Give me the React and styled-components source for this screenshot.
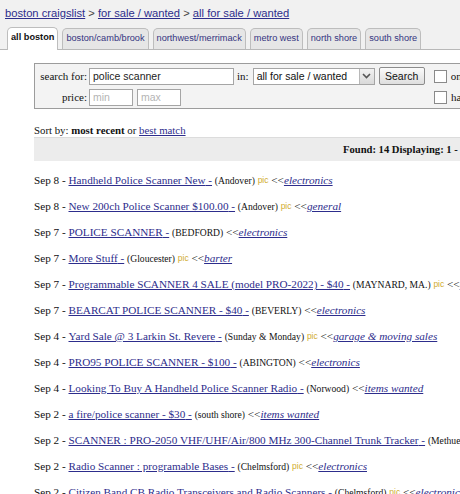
import styled, { createGlobalStyle } from 'styled-components';

const GlobalStyle = createGlobalStyle`
	html, body {
		margin: 0;
		padding: 0;
		overflow: hidden;
		background: #fff;
	}
	body {
		font-family: 'Liberation Serif', 'Times New Roman', serif;
		font-size: 11px;
		color: #111;
	}
`;

const Page = styled.div`
	width: 760px;
`;

const Top = styled.div`
	background: #f1f1f1;
	padding: 7px 0 0 5px;
	border-bottom: 1px solid #b8b8b8;
	font-family: 'Liberation Sans', Arial, sans-serif;
`;

const Crumbs = styled.div`
	font-size: 11.2px;
	color: #444;
	height: 20px;
	white-space: nowrap;
`;

const Link = styled.a`
	color: #2d2d8c;
	text-decoration: underline;
	font-style: ${(p) => (p.$italic ? 'italic' : 'normal')};
	cursor: pointer;
`;

const Tabs = styled.div`
	display: flex;
	gap: 4px;
	padding-left: 2px;
	align-items: flex-end;
`;

const Tab = styled.div`
	font-size: 9.2px;
	font-weight: ${(p) => (p.$active ? 700 : 400)};
	color: ${(p) => (p.$active ? '#111' : '#343480')};
	background: ${(p) => (p.$active ? '#fff' : '#e6e6e6')};
	border: 1px solid #bdbdbd;
	border-bottom: none;
	border-radius: 5px 5px 0 0;
	padding: 4px 3px 5px;
	margin-bottom: ${(p) => (p.$active ? '-1px' : '0')};
	height: ${(p) => (p.$active ? '13px' : '11px')};
	line-height: 11px;
	white-space: nowrap;
`;

const Main = styled.div`
	padding: 13px 0 0 34px;
`;

const SearchBox = styled.div`
	border: 1px solid #9c9c9c;
	background: #f3f3f3;
	padding: 3px 0 2px 2px;
	display: flex;
	flex-direction: column;
	gap: 3px;
`;

const FormRow = styled.div`
	display: flex;
	align-items: center;
	height: 18px;
	white-space: nowrap;
`;

const Label = styled.span`
	width: 50px;
	text-align: right;
	margin-right: 2px;
	font-size: 11px;
`;

const TextInput = styled.div`
	box-sizing: border-box;
	width: ${(p) => p.$w}px;
	height: 17px;
	border: 1px solid #a5a5a5;
	background: #fff;
	font-family: 'Liberation Sans', Arial, sans-serif;
	font-size: 10.5px;
	color: ${(p) => (p.$placeholder ? '#b4b4b4' : '#222')};
	padding: 1px 3px;
	margin-right: 4px;
	line-height: 13px;
`;

const InLabel = styled.span`
	margin: 0 4px 0 -1px;
	font-size: 11px;
`;

const Select = styled.div`
	box-sizing: border-box;
	width: 122px;
	height: 17px;
	border: 1px solid #a5a5a5;
	background: #fff;
	display: flex;
	align-items: center;
	font-family: 'Liberation Sans', Arial, sans-serif;
	font-size: 10.5px;
	padding-left: 3px;
	justify-content: space-between;
`;

const Arrow = styled.div`
	width: 15px;
	height: 15px;
	box-sizing: border-box;
	background: linear-gradient(#f2f2f2, #d9d9d9);
	border-left: 1px solid #b8b8b8;
	display: flex;
	align-items: center;
	justify-content: center;
`;

const Button = styled.div`
	margin-left: 4px;
	box-sizing: border-box;
	width: 46px;
	height: 18px;
	border: 1px solid #8c8c8c;
	border-radius: 2px;
	background: linear-gradient(#fbfbfb, #dedede);
	font-family: 'Liberation Sans', Arial, sans-serif;
	font-size: 10.5px;
	display: flex;
	align-items: center;
	justify-content: center;
`;

const Check = styled.div`
	width: 11px;
	height: 11px;
	border: 1px solid #8a8a8a;
	background: #fff;
	margin: 0 4px 0 ${(p) => p.$ml}px;
`;

const SortLine = styled.div`
	margin-top: 15px;
	font-size: 10.8px;
`;

const FoundBar = styled.div`
	margin-top: 1px;
	background: #ececec;
	border-top: 1px solid #dcdcdc;
	height: 23px;
	display: flex;
	align-items: center;
	padding-left: 309px;
	font-weight: 700;
	font-size: 10.6px;
	white-space: nowrap;
`;

const List = styled.div`
	padding-top: 6px;
`;

const Row = styled.div`
	height: 26px;
	display: flex;
	align-items: center;
	font-size: 11.2px;
	white-space: nowrap;
`;

const Small = styled.span`
	font-size: 9.6px;
`;

const Pic = styled.span`
	font-family: 'Liberation Sans', Arial, sans-serif;
	font-size: 8.5px;
	color: #d1ad2f;
`;

const rows = [
	['Sep 8', 'Handheld Police Scanner New', 'Andover', true, 'electronics'],
	['Sep 8', 'New 200ch Police Scanner $100.00', 'Andover', true, 'general'],
	['Sep 7', 'POLICE SCANNER', 'BEDFORD', false, 'electronics'],
	['Sep 7', 'More Stuff', 'Gloucester', true, 'barter'],
	['Sep 7', 'Programmable SCANNER 4 SALE (model PRO-2022) - $40', 'MAYNARD, MA.', true, 'electronics'],
	['Sep 7', 'BEARCAT POLICE SCANNER - $40', 'BEVERLY', false, 'electronics'],
	['Sep 4', 'Yard Sale @ 3 Larkin St. Revere', 'Sunday & Monday', true, 'garage & moving sales'],
	['Sep 4', 'PRO95 POLICE SCANNER - $100', 'ABINGTON', false, 'electronics'],
	['Sep 4', 'Looking To Buy A Handheld Police Scanner Radio', 'Norwood', false, 'items wanted'],
	['Sep 2', 'a fire/police scanner - $30', 'south shore', false, 'items wanted'],
	['Sep 2', 'SCANNER : PRO-2050 VHF/UHF/Air/800 MHz 300-Channel Trunk Tracker', 'Methuen', false, 'electronics'],
	['Sep 2', 'Radio Scanner : programable Bases', 'Chelmsford', true, 'electronics'],
	['Sep 2', 'Citizen Band CB Radio Transceivers and Radio Scanners', 'Chelmsford', true, 'electronics'],
];

const tabs = ['all boston', 'boston/camb/brook', 'northwest/merrimack', 'metro west', 'north shore', 'south shore'];

export default function App() {
	return (
		<Page>
			<GlobalStyle />
			<Top>
				<Crumbs>
					<Link>boston craigslist</Link> &gt; <Link>for sale / wanted</Link> &gt;{' '}
					<Link>all for sale / wanted</Link>
				</Crumbs>
				<Tabs>
					{tabs.map((t, i) => (
						<Tab key={t} $active={i === 0}>
							{t}
						</Tab>
					))}
				</Tabs>
			</Top>
			<Main>
				<SearchBox>
					<FormRow>
						<Label>search for:</Label>
						<TextInput $w={145}>police scanner</TextInput>
						<InLabel>in:</InLabel>
						<Select>
							all for sale / wanted
							<Arrow>
								<svg width="9" height="6" viewBox="0 0 9 6">
									<path d="M1 1 L4.5 4.5 L8 1" fill="none" stroke="#555" strokeWidth="1.6" />
								</svg>
							</Arrow>
						</Select>
						<Button>Search</Button>
						<Check $ml={9} />
						<span>only search titles</span>
					</FormRow>
					<FormRow>
						<Label>price:</Label>
						<TextInput $w={44} $placeholder>
							min
						</TextInput>
						<TextInput $w={44} $placeholder>
							max
						</TextInput>
						<Check $ml={249} />
						<span>has image</span>
					</FormRow>
				</SearchBox>
				<SortLine>
					Sort by: <b>most recent</b> or <Link>best match</Link>
				</SortLine>
				<FoundBar>Found: 14 Displaying: 1 - 14</FoundBar>
				<List>
					{rows.map(([date, title, place, pic, cat], i) => (
						<Row key={i}>
							{date} -&nbsp;<Link>{title} -</Link>&nbsp;<Small>({place})</Small>&nbsp;
							{pic && (
								<>
									<Pic>pic</Pic>&nbsp;
								</>
							)}
							&lt;&lt;<Link $italic>{cat}</Link>
						</Row>
					))}
				</List>
			</Main>
		</Page>
	);
}
